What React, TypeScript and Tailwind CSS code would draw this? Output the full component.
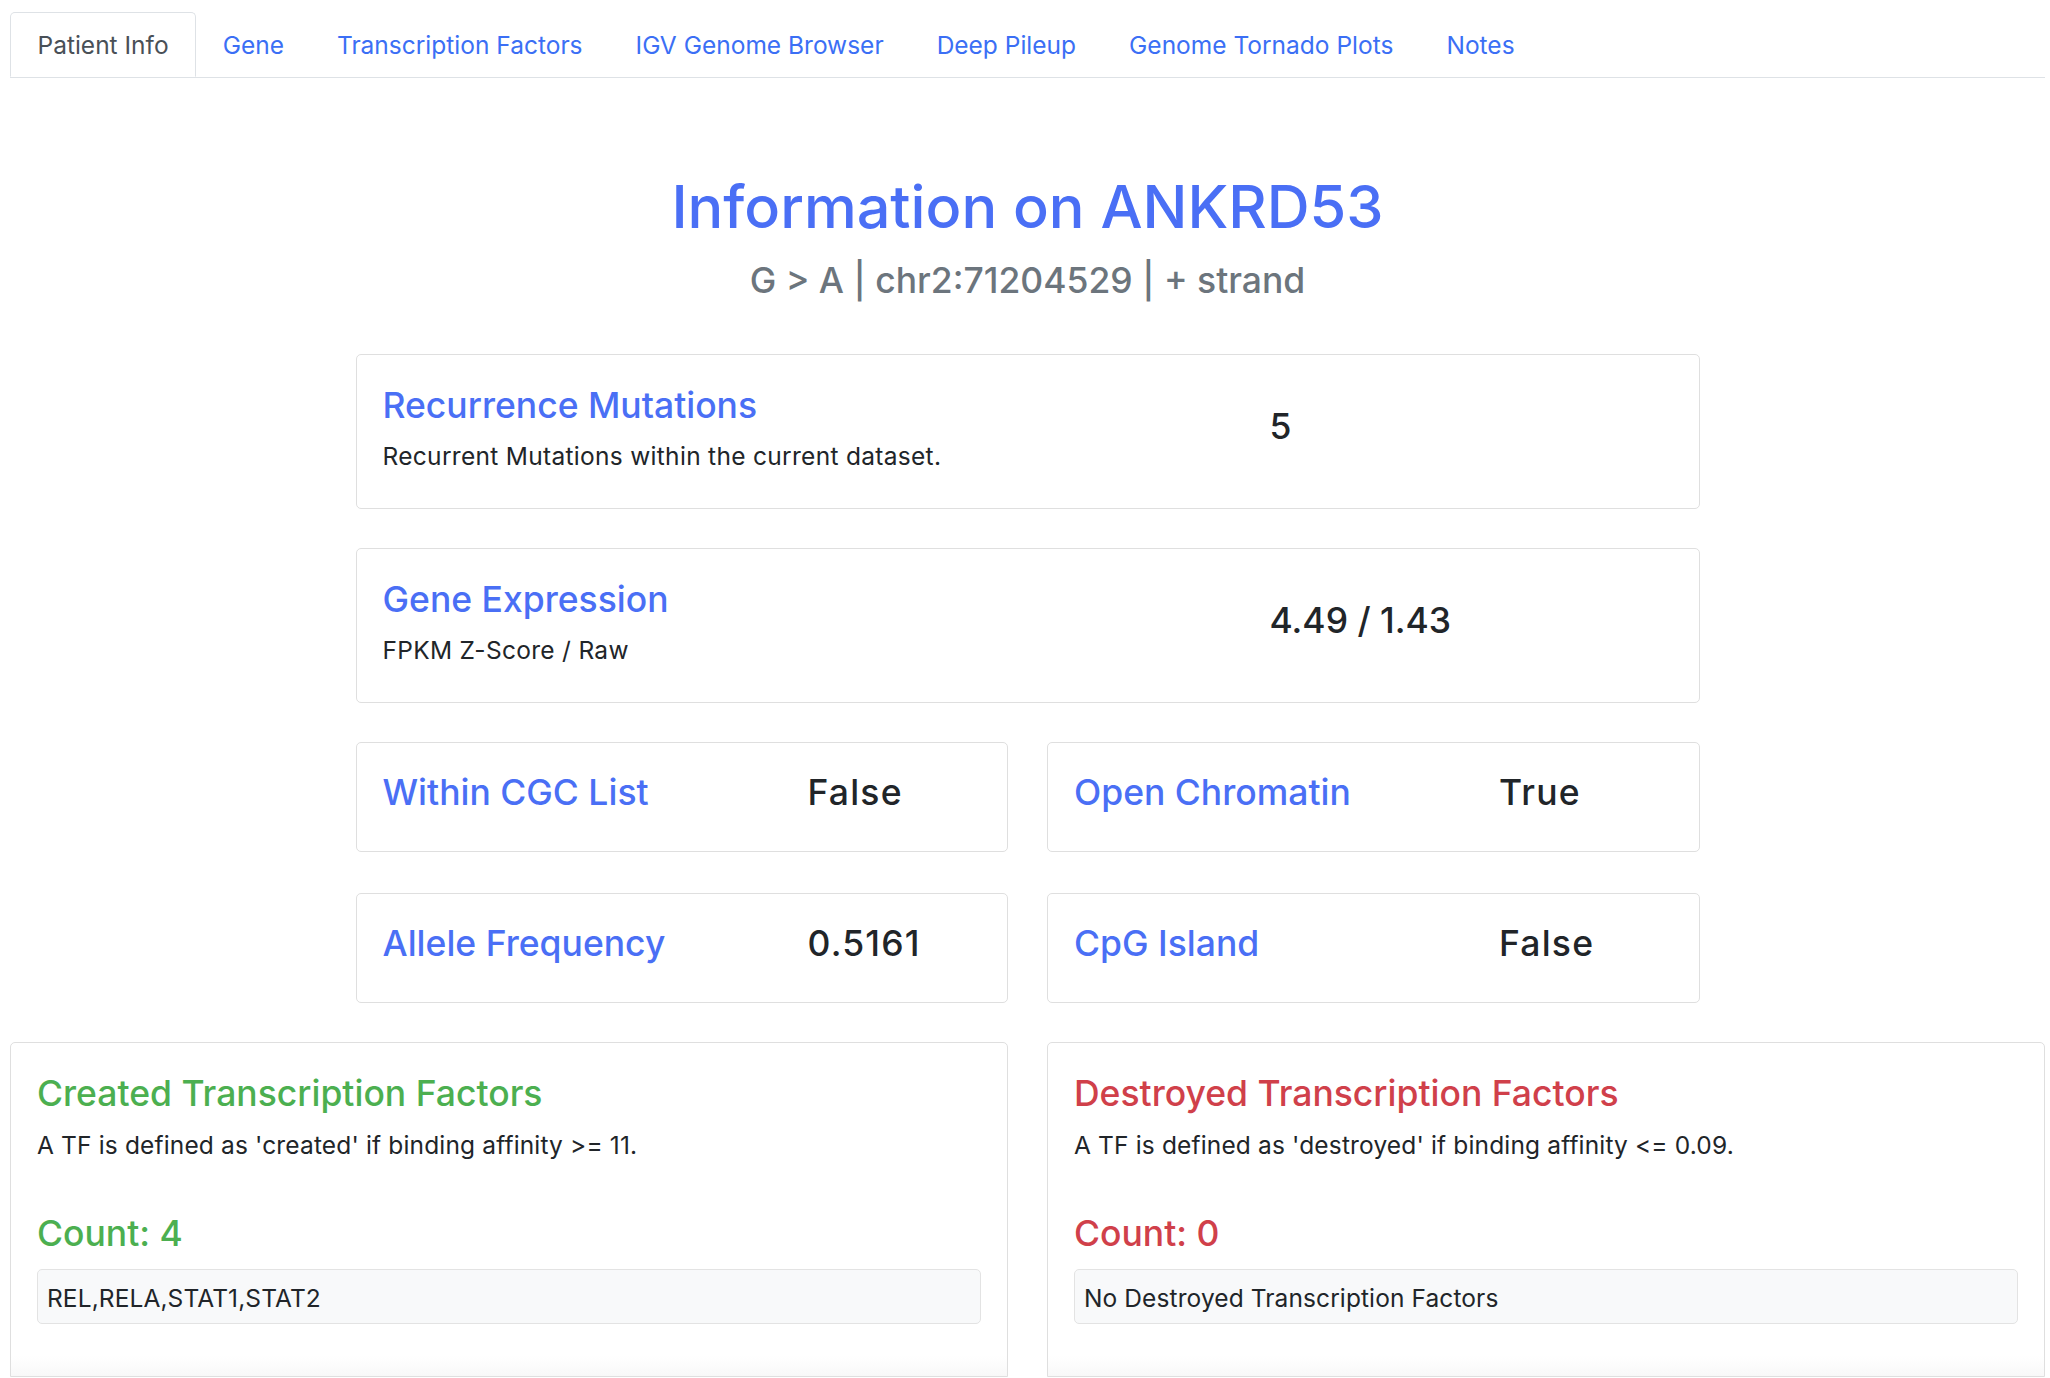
import React from 'react';

const tabs = [
  'Patient Info',
  'Gene',
  'Transcription Factors',
  'IGV Genome Browser',
  'Deep Pileup',
  'Genome Tornado Plots',
  'Notes',
];

const StatCard: React.FC<{ title: string; value: string }> = ({ title, value }) => {
  return (
    <div className="flex h-[110px] items-center rounded-[5px] border border-[#dfdfdf] px-[26px] pb-[10px]">
      <div className="w-[386px] text-[35.5px] font-[450] leading-[43px] text-[#4a6ff5]">{title}</div>
      <div className="ml-[39px] text-[35.5px] font-[450] leading-[43px] tracking-[1.2px] text-[#212529]">{value}</div>
    </div>
  );
};

const WideCard: React.FC<{ title: string; desc: string; value: string }> = ({ title, desc, value }) => {
  return (
    <div className="flex items-center rounded-[5px] border border-[#dfdfdf] px-[26px] pt-[29px] pb-[35px]">
      <div className="w-[848px]">
        <div className="text-[35.5px] font-[450] leading-[43px] text-[#4a6ff5]">{title}</div>
        <div className="mt-[13px] text-[24.5px] leading-[33px] tracking-[0.3px] text-[#212529]">{desc}</div>
      </div>
      <div className="ml-[39px] -mt-[4px] text-[35.5px] font-[450] leading-[43px] text-[#212529]">{value}</div>
    </div>
  );
};

const TfCard: React.FC<{ kind: 'created' | 'destroyed'; rule: string; count: number; list: string }> = ({
  kind,
  rule,
  count,
  list,
}) => {
  const color = kind === 'created' ? 'text-[#4caf50]' : 'text-[#d0404a]';
  return (
    <div className="flex h-[335px] flex-col rounded-t-[5px] border border-[#dfdfdf]">
      <div className="flex-1 px-[26px] pt-[29px]">
        <div className={`text-[35.5px] font-[450] leading-[43px] ${color}`}>
          {kind === 'created' ? 'Created Transcription Factors' : 'Destroyed Transcription Factors'}
        </div>
        <div className="mt-[14px] text-[24.5px] leading-[33px] tracking-[0.15px] text-[#212529]">{rule}</div>
        <div className={`mt-[50px] text-[35.5px] font-[450] leading-[43px] ${color}`}>Count: {count}</div>
        <div className="mt-[14px] flex h-[55px] items-center rounded-[5px] border border-[#e3e3e3] bg-[#f8f9fa] px-[9px] pt-[3px] text-[24.5px] tracking-[0.1px] text-[#212529]">
          {list}
        </div>
      </div>
      <div className="h-[20px] bg-gradient-to-b from-white to-[#f8f8f8]" />
    </div>
  );
};

export default function App() {
  return (
    <div className="min-h-screen bg-white pl-[10px] pr-[5px] pt-[12px] font-['Inter',sans-serif]">
      <div className="flex border-b border-[#dee2e6]">
        {tabs.map((t, i) =>
          i === 0 ? (
            <div
              key={t}
              className="-mb-px flex h-[65px] items-center rounded-t-[5px] border border-[#dee2e6] border-b-white bg-white px-[26.5px] pt-[2px] text-[24.5px] text-[#495057]"
            >
              {t}
            </div>
          ) : (
            <div key={t} className="flex h-[65px] items-center px-[26.5px] pt-[2px] text-[24.5px] text-[#3b6ff5]">
              {t}
            </div>
          )
        )}
      </div>

      <div className="mt-[93px] text-center">
        <h1 className="text-[59.4px] font-[450] leading-[71px] text-[#4a6ff5]">Information on ANKRD53</h1>
        <div className="mt-[17px] text-[35.5px] font-[450] leading-[43px] text-[#6c757d]">
          G &gt; A | chr2:71204529 | + strand
        </div>
      </div>

      <div className="mx-auto mt-[52px] flex w-[1344px] flex-col gap-[39px]">
        <WideCard title="Recurrence Mutations" desc="Recurrent Mutations within the current dataset." value="5" />
        <WideCard title="Gene Expression" desc="FPKM Z-Score / Raw" value="4.49 / 1.43" />
        <div className="grid grid-cols-2 gap-x-[39px] gap-y-[41px]">
          <StatCard title="Within CGC List" value="False" />
          <StatCard title="Open Chromatin" value="True" />
          <StatCard title="Allele Frequency" value="0.5161" />
          <StatCard title="CpG Island" value="False" />
        </div>
      </div>

      <div className="mt-[39px] grid grid-cols-2 gap-[39px]">
        <TfCard
          kind="created"
          rule="A TF is defined as 'created' if binding affinity >= 11."
          count={4}
          list="REL,RELA,STAT1,STAT2"
        />
        <TfCard
          kind="destroyed"
          rule="A TF is defined as 'destroyed' if binding affinity <= 0.09."
          count={0}
          list="No Destroyed Transcription Factors"
        />
      </div>
    </div>
  );
}
